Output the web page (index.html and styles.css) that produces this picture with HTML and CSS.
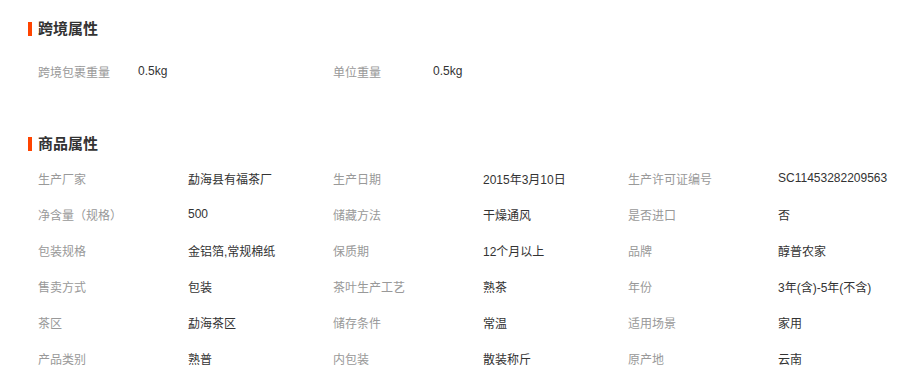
FILE: index.html
```html
<!DOCTYPE html>
<html lang="zh-CN">
<head>
<meta charset="utf-8">
<title>属性</title>
<link rel="stylesheet" href="styles.css">
</head>
<body>
<div class="attrs">
  <section class="sect sect-cross">
    <h3 class="sect-title"><span class="bar"></span>跨境属性</h3>
    <div class="grid grid-cross">
      <div class="k">跨境包裹重量</div><div class="v">0.5kg</div>
      <div class="k">单位重量</div><div class="v">0.5kg</div>
    </div>
  </section>
  <section class="sect sect-goods">
    <h3 class="sect-title"><span class="bar"></span>商品属性</h3>
    <div class="grid grid-goods">
      <div class="k">生产厂家</div><div class="v">勐海县有福茶厂</div>
      <div class="k">生产日期</div><div class="v">2015年3月10日</div>
      <div class="k">生产许可证编号</div><div class="v">SC11453282209563</div>

      <div class="k">净含量（规格）</div><div class="v">500</div>
      <div class="k">储藏方法</div><div class="v">干燥通风</div>
      <div class="k">是否进口</div><div class="v">否</div>

      <div class="k">包装规格</div><div class="v">金铝箔,常规棉纸</div>
      <div class="k">保质期</div><div class="v">12个月以上</div>
      <div class="k">品牌</div><div class="v">醇普农家</div>

      <div class="k">售卖方式</div><div class="v">包装</div>
      <div class="k">茶叶生产工艺</div><div class="v">熟茶</div>
      <div class="k">年份</div><div class="v">3年(含)-5年(不含)</div>

      <div class="k">茶区</div><div class="v">勐海茶区</div>
      <div class="k">储存条件</div><div class="v">常温</div>
      <div class="k">适用场景</div><div class="v">家用</div>

      <div class="k">产品类别</div><div class="v">熟普</div>
      <div class="k">内包装</div><div class="v">散装称斤</div>
      <div class="k">原产地</div><div class="v">云南</div>
    </div>
  </section>
</div>
</body>
</html>
```
FILE: styles.css
```css
html, body {
  margin: 0;
  padding: 0;
  background: #fff;
}
body {
  font-family: "Liberation Sans", "Noto Sans CJK SC", sans-serif;
  font-size: 12px;
  color: #333;
}
.attrs {
  padding: 19px 0 0 28px;
}
.sect-title {
  display: flex;
  align-items: center;
  margin: 0;
  height: 20px;
  font-size: 15px;
  font-weight: bold;
  color: #333;
  line-height: 20px;
}
.bar {
  width: 4px;
  height: 14px;
  background: #ff4400;
  margin-right: 6px;
}
.sect-cross .sect-title {
  margin-bottom: 14px;
}
.sect-goods {
  margin-top: 45px;
}
.sect-goods .sect-title {
  margin-bottom: 6px;
}
.grid {
  display: grid;
  padding-left: 10px;
  grid-auto-rows: 36px;
  align-items: center;
}
.grid-cross {
  grid-template-columns: 100px 195px 100px 195px;
}
.grid-goods {
  grid-template-columns: 150px 145px 150px 145px 150px 145px;
}
.k {
  color: #999;
  white-space: nowrap;
}
.v {
  color: #333;
  white-space: nowrap;
}
```
